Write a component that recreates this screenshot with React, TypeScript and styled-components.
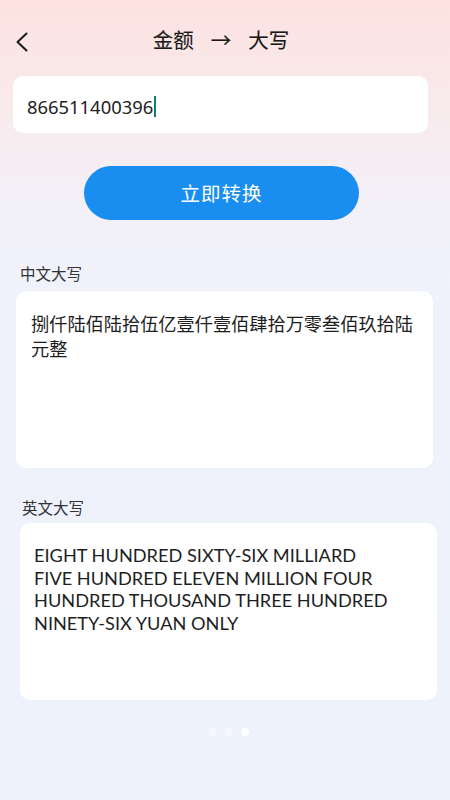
import React from "react";
import styled, { createGlobalStyle } from "styled-components";

const Global = createGlobalStyle`
  html, body { margin: 0; padding: 0; }
  body {
    width: 450px;
    min-height: 800px;
    background: linear-gradient(180deg, #fde2e1 0px, #f9e9ea 90px, #f3f0f8 200px, #eff2fd 300px, #eef2fd 800px);
    font-family: "Noto Sans", "Noto Sans CJK SC", sans-serif;
    color: #1d1d1f;
  }
`;

const Page = styled.div`
  width: 450px;
  height: 800px;
  display: flex;
  flex-direction: column;
  box-sizing: border-box;
`;

const Header = styled.div`
  height: 76px;
  display: flex;
  align-items: center;
  position: relative;
  padding-top: 2px;
  box-sizing: border-box;
`;

const Back = styled.button`
  position: absolute;
  left: 10px;
  top: 29px;
  width: 24px;
  height: 26px;
  border: none;
  background: none;
  padding: 0;
  display: flex;
  align-items: center;
  justify-content: center;
`;

const Title = styled.div`
  flex: 1;
  font-family: "Noto Sans CJK SC", sans-serif;
  font-size: 20.5px;
  font-weight: 400;
  color: #1a1a1a;
  display: flex;
  justify-content: center;
  gap: 17px;
  padding-right: 8px;
  -webkit-text-stroke: 0.15px #1a1a1a;
`;

const InputBox = styled.div<{ $left: number; $width: number }>`
  margin-left: ${(p) => p.$left}px;
  width: ${(p) => p.$width}px;
  height: 57px;
  background: #ffffff;
  border-radius: 10px;
  display: flex;
  align-items: center;
  padding-left: 14px;
  box-sizing: border-box;
  font-family: "Noto Sans", sans-serif;
  font-size: 18.4px;
  color: #222;
  padding-top: 3px;
`;

const Caret = styled.span`
  display: inline-block;
  width: 2px;
  height: 21px;
  background: #0f7d6f;
  margin-left: 1px;
`;

const ButtonRow = styled.div`
  display: flex;
  padding-left: 84px;
  margin-top: 33px;
`;

const ConvertButton = styled.button`
  width: 275px;
  height: 54px;
  border: none;
  border-radius: 27px;
  background: #1a8df0;
  color: #fff;
  font-family: "Noto Sans CJK SC", sans-serif;
  font-size: 19.5px;
  letter-spacing: 1px;
  display: flex;
  align-items: center;
  justify-content: center;
  padding: 0 0 2px 0;
`;

const Label = styled.div<{ $left: number; $top: number }>`
  margin-left: ${(p) => p.$left}px;
  margin-top: ${(p) => p.$top}px;
  font-family: "Noto Sans CJK SC", sans-serif;
  font-size: 15.5px;
  color: #333;
  height: 22px;
  line-height: 22px;
`;

const ResultCard = styled.div<{ $left: number; $top: number }>`
  margin-left: ${(p) => p.$left}px;
  margin-top: ${(p) => p.$top}px;
  width: 417px;
  height: 177px;
  background: #ffffff;
  border-radius: 10px;
  box-sizing: border-box;
`;

const CnText = styled.div`
  padding: 20px 12px 0 15px;
  font-family: "Noto Sans CJK SC", sans-serif;
  font-size: 18.2px;
  line-height: 25px;
  color: #1e1e1e;
`;

const EnText = styled.div`
  padding: 21px 16px 0 14px;
  font-family: "Lato", sans-serif;
  font-size: 18.2px;
  line-height: 22.5px;
  color: #1e1e1e;
`;

const EnLine = styled.span`
  display: block;
  white-space: nowrap;
`;

const Dots = styled.div`
  display: flex;
  justify-content: center;
  gap: 8px;
  margin-top: 28px;
  padding-left: 8px;
`;

const Dot = styled.span<{ $active?: boolean }>`
  width: 8px;
  height: 8px;
  border-radius: 50%;
  background: ${(p) => (p.$active ? "#ffffff" : "#f5f7fe")};
`;

const englishLines = [
  "EIGHT HUNDRED SIXTY-SIX MILLIARD",
  "FIVE HUNDRED ELEVEN MILLION FOUR",
  "HUNDRED THOUSAND THREE HUNDRED",
  "NINETY-SIX YUAN ONLY",
];

export default function App() {
  return (
    <>
      <Global />
      <Page>
        <Header>
          <Back aria-label="back">
            <svg width="14" height="20" viewBox="0 0 14 20" fill="none">
              <path d="M11.5 1.5 L2.5 10 L11.5 18.5" stroke="#1a1a1a" strokeWidth="2" strokeLinecap="round" strokeLinejoin="round" />
            </svg>
          </Back>
          <Title>
            <span>金额</span>
            <span>→</span>
            <span>大写</span>
          </Title>
        </Header>
        <InputBox $left={13} $width={415}>
          866511400396
          <Caret />
        </InputBox>
        <ButtonRow>
          <ConvertButton>立即转换</ConvertButton>
        </ButtonRow>
        <Label $left={20} $top={42}>中文大写</Label>
        <ResultCard $left={16} $top={7}>
          <CnText>捌仟陆佰陆拾伍亿壹仟壹佰肆拾万零叁佰玖拾陆元整</CnText>
        </ResultCard>
        <Label $left={22} $top={28}>英文大写</Label>
        <ResultCard $left={20} $top={5}>
          <EnText>
            {englishLines.map((l) => (
              <EnLine key={l}>{l}</EnLine>
            ))}
          </EnText>
        </ResultCard>
        <Dots>
          <Dot />
          <Dot />
          <Dot $active />
        </Dots>
      </Page>
    </>
  );
}
